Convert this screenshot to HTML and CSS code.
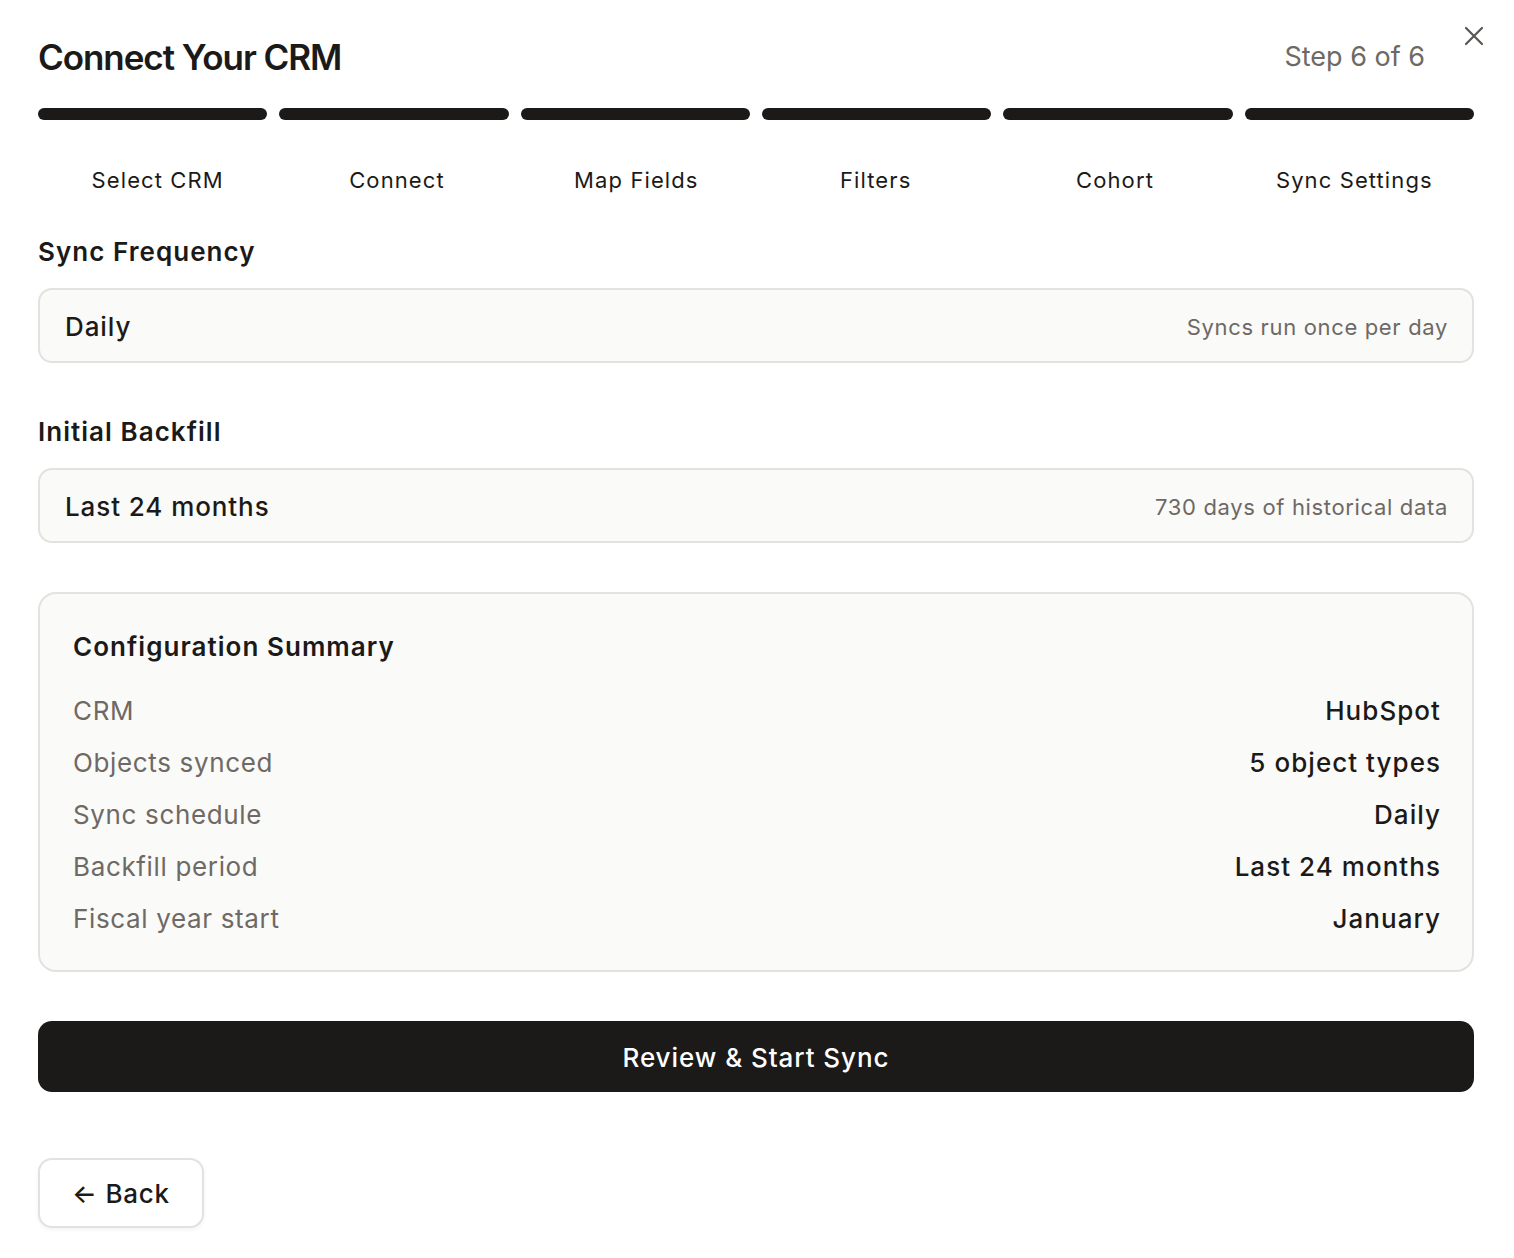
FILE: index.html
```html
<!DOCTYPE html>
<html lang="en">
<head>
<meta charset="utf-8">
<title>Connect Your CRM</title>
<link rel="stylesheet" href="styles.css">
</head>
<body>
<div class="modal">
  <button class="close" aria-label="Close">
    <svg width="22" height="22" viewBox="0 0 22 22" fill="none" stroke="#5a5652" stroke-width="2.2" stroke-linecap="round"><path d="M3 3L19 19M19 3L3 19"/></svg>
  </button>
  <header class="header">
    <h1 class="title">Connect Your CRM</h1>
    <span class="step-count">Step 6 of 6</span>
  </header>
  <div class="progress">
    <div class="bar"></div><div class="bar"></div><div class="bar"></div>
    <div class="bar"></div><div class="bar"></div><div class="bar"></div>
  </div>
  <div class="steps">
    <span>Select CRM</span><span>Connect</span><span>Map Fields</span>
    <span>Filters</span><span>Cohort</span><span>Sync Settings</span>
  </div>

  <section class="field">
    <h2 class="field-label">Sync Frequency</h2>
    <div class="select">
      <span class="select-value">Daily</span>
      <span class="select-hint">Syncs run once per day</span>
    </div>
  </section>

  <section class="field field-second">
    <h2 class="field-label">Initial Backfill</h2>
    <div class="select">
      <span class="select-value">Last 24 months</span>
      <span class="select-hint">730 days of historical data</span>
    </div>
  </section>

  <section class="summary">
    <h3 class="summary-title">Configuration Summary</h3>
    <dl class="summary-rows">
      <div class="row"><dt>CRM</dt><dd>HubSpot</dd></div>
      <div class="row"><dt>Objects synced</dt><dd>5 object types</dd></div>
      <div class="row"><dt>Sync schedule</dt><dd>Daily</dd></div>
      <div class="row"><dt>Backfill period</dt><dd>Last 24 months</dd></div>
      <div class="row"><dt>Fiscal year start</dt><dd>January</dd></div>
    </dl>
  </section>

  <button class="primary">Review &amp; Start Sync</button>

  <div class="footer">
    <button class="back">← Back</button>
  </div>
</div>
</body>
</html>
```

FILE: styles.css
```css
* { box-sizing: border-box; }
html, body {
  margin: 0;
  padding: 0;
  background: #ffffff;
}
body {
  font-family: Inter, "Noto Sans", "Liberation Sans", sans-serif;
  color: #1c1a18;
  letter-spacing: 0.03em;
}
.modal {
  position: relative;
  padding: 36px 40px 30px 38px;
}
.close {
  position: absolute;
  top: 25px;
  right: 29px;
  width: 22px;
  height: 22px;
  padding: 0;
  border: 0;
  background: none;
  display: flex;
}
.header {
  display: flex;
  justify-content: space-between;
  align-items: center;
  height: 42px;
  padding-right: 49px;
}
.title {
  margin: 0;
  font-size: 35px;
  font-weight: 600;
  letter-spacing: -0.03em;
  line-height: 42px;
}
.step-count {
  font-size: 27px;
  color: #6e6964;
  line-height: 42px;
  letter-spacing: 0;
}
.progress {
  display: grid;
  grid-template-columns: repeat(6, 1fr);
  gap: 12px;
  margin-top: 30px;
}
.bar {
  height: 12px;
  border-radius: 6px;
  background: #1c1a18;
}
.steps {
  display: grid;
  grid-template-columns: repeat(6, 1fr);
  margin-top: 46px;
  text-align: center;
  font-size: 22px;
  line-height: 28px;
  letter-spacing: 0.05em;
}
.field { margin-top: 42px; }
.field-second { margin-top: 53px; }
.field-label {
  margin: 0;
  font-size: 26px;
  font-weight: 600;
  line-height: 32px;
  letter-spacing: 0.04em;
}
.select {
  margin-top: 20px;
  height: 75px;
  border: 2px solid #e3e2df;
  border-radius: 14px;
  background: #fafaf9;
  display: flex;
  align-items: center;
  justify-content: space-between;
  padding: 2px 24px 0 25px;
}
.select-value {
  font-size: 26px;
  font-weight: 500;
  letter-spacing: 0.035em;
}
.select-hint {
  font-size: 22px;
  color: #6e6964;
  letter-spacing: 0.03em;
}
.summary {
  margin-top: 49px;
  border: 2px solid #e3e2df;
  border-radius: 18px;
  background: #fafaf9;
  padding: 37px 31px 33px 33px;
}
.summary-title {
  margin: 0;
  font-size: 26px;
  font-weight: 600;
  line-height: 32px;
  letter-spacing: 0.04em;
}
.summary-rows {
  margin: 30px 0 0 0;
  display: flex;
  flex-direction: column;
  gap: 16px;
}
.row {
  display: flex;
  justify-content: space-between;
  font-size: 26px;
  line-height: 36px;
  letter-spacing: 0.025em;
}
.row dt { color: #6e6964; }
.row dd { margin: 0; font-weight: 500; letter-spacing: 0.04em; }
.primary {
  display: block;
  width: 100%;
  margin-top: 49px;
  height: 71px;
  border: 0;
  border-radius: 14px;
  background: #1c1a18;
  color: #ffffff;
  font-family: inherit;
  font-size: 26px;
  font-weight: 500;
  letter-spacing: 0.036em;
  padding-top: 2px;
}
.footer {
  margin-top: 66px;
}
.back {
  height: 70px;
  width: 166px;
  border: 2px solid #e3e2df;
  border-radius: 14px;
  background: #ffffff;
  box-shadow: 0 2px 4px rgba(0,0,0,0.05);
  font-family: inherit;
  font-size: 26px;
  font-weight: 500;
  color: #1c1a18;
  letter-spacing: 0.03em;
}
```
